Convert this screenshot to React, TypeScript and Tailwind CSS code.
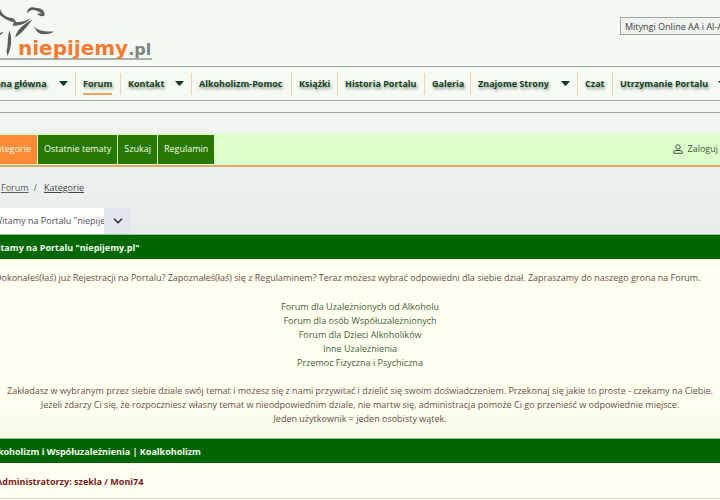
import { ReactElement } from 'react';
import clsx from 'clsx';

type MenuItem = {
  label: string;
  width: string;
  hasChildren?: boolean;
  isActive?: boolean;
};

const menuItems: MenuItem[] = [
  { label: 'Strona główna', width: 'w-[101px]', hasChildren: true },
  { label: 'Forum', width: 'w-[45px]', isActive: true },
  { label: 'Kontakt', width: 'w-[71px]', hasChildren: true },
  { label: 'Alkoholizm-Pomoc', width: 'w-[100px]' },
  { label: 'Książki', width: 'w-[46px]' },
  { label: 'Historia Portalu', width: 'w-[87px]' },
  { label: 'Galeria', width: 'w-[46px]' },
  { label: 'Znajome Strony', width: 'w-[107px]', hasChildren: true },
  { label: 'Czat', width: 'w-[35px]' },
  { label: 'Utrzymanie Portalu', width: 'w-[122px]', hasChildren: true },
];

const forumTabs = [
  { label: 'Kategorie', isActive: true },
  { label: 'Ostatnie tematy' },
  { label: 'Szukaj' },
  { label: 'Regulamin' },
];

const forumLinks = [
  'Forum dla Uzależnionych od Alkoholu',
  'Forum dla osób Współuzależnionych',
  'Forum dla Dzieci Alkoholików',
  'Inne Uzależnienia',
  'Przemoc Fizyczna i Psychiczna',
];

const Logo = (): ReactElement => (
  <a
    href="#home"
    className="relative block h-[60px] w-[152px] border-b-2 border-[#a9afa9]"
  >
    <svg
      className="absolute left-0 top-0"
      width="60"
      height="58"
      viewBox="0 0 60 58"
      fill="#5a5f5a"
      aria-hidden="true"
    >
      <path d="M0 9C2 14 5 16.500 9 17.500C13 18 15 19 16 22C21 22.500 26 21 31 18C27 23 20 26.500 12.500 25.500L14 22.500C8 21 3 18 0 15Z" />
      <path d="M32.500 19.500C24 24 17 29 15 37.500C21 34 27 27 32.500 19.500Z" />
      <path d="M27 13.500C27 8.500 31 6 36 8C41 7.500 45.500 11 44.500 15.500C42 17 39 16 37 13.500L41.500 13.500C39 11.500 37 10.500 34 10C31 9.500 29 11 27 13.500Z" />
      <path d="M33 25.500C37 30.500 44 32 54 31.500C49 35 41 35 37.500 32Z" />
      <path d="M9.500 30.500C12 37 12 47 7.500 56L6.500 51.500C8.500 44 7 37 9.500 30.500Z" />
      <path d="M0 33L4 31.500L1 34.500L0 35Z" />
    </svg>
    <span className="absolute bottom-0 left-[18px] whitespace-nowrap font-['DejaVu_Sans'] text-[20px] font-bold leading-[16px] text-[#f47a30]">
      niepijemy
      <span className="text-[16px] text-[#7b817d]">.pl</span>
    </span>
  </a>
);

const Caret = (): ReactElement => (
  <svg width="9" height="5" viewBox="0 0 9 5" fill="#123d20" aria-hidden="true">
    <path d="M0 0H9L5.2 4.4Q4.5 5 3.8 4.4Z" />
  </svg>
);

const MainMenu = (): ReactElement => (
  <nav className="flex h-[35px] items-center overflow-hidden border-y border-[#a0a8a0] bg-[#f5faf5]">
    <ul className="-ml-[25px] flex">
      {menuItems.map(({ label, width, hasChildren, isActive }) => (
        <li
          key={label}
          className={clsx(
            'flex h-[22px] shrink-0 items-center justify-between border-r border-[#f0d2b0] px-[7px]',
            width
          )}
        >
          <a
            href="#menu"
            className={clsx(
              'whitespace-nowrap border-b-2 pt-[2px] font-bold leading-[18px] text-[#183f22] [text-shadow:1px_2px_3px_#7d8f7d]',
              isActive ? 'border-[#f5a45c]' : 'border-transparent'
            )}
          >
            {label}
          </a>
          {hasChildren && <Caret />}
        </li>
      ))}
    </ul>
  </nav>
);

const ForumBar = (): ReactElement => (
  <div className="flex h-[34px] items-center justify-between overflow-hidden border-b-2 border-[#e2a868] bg-[#dcffcc]">
    <div className="-ml-[15px] flex gap-px">
      {forumTabs.map(({ label, isActive }) => (
        <a
          key={label}
          href="#tab"
          className={clsx(
            'flex h-[29px] items-center whitespace-nowrap px-[6px] text-[#f4ffe9]',
            isActive ? 'bg-[#ff8a35]' : 'bg-[#267800]'
          )}
        >
          {label}
        </a>
      ))}
    </div>
    <a
      href="#login"
      className="-mr-[12px] flex items-center gap-[5px] whitespace-nowrap text-[#3d5a38]"
    >
      <svg
        width="10"
        height="10"
        viewBox="0 0 10 10"
        fill="none"
        stroke="currentColor"
        aria-hidden="true"
      >
        <circle cx="5" cy="3" r="2.2" />
        <path d="M.8 9.3V8.2Q1 6.5 3 6.5H7Q9 6.5 9.2 8.2V9.3Z" />
      </svg>
      Zaloguj się
    </a>
  </div>
);

const SectionHeading = ({ title }: { title: string }): ReactElement => (
  <h2 className="h-[25px] overflow-hidden border-t border-[#8fc88f] bg-[#006600] font-bold leading-[26px] text-[#f4fff0]">
    <span className="-ml-[11px] whitespace-nowrap">{title}</span>
  </h2>
);

const App = (): ReactElement => {
  return (
    <div className="min-h-screen overflow-hidden bg-[#fffff0] font-['Open_Sans','Noto_Sans',sans-serif] text-[9px] leading-[14px]">
      <header className="bg-[#f4f9f4]">
        <div className="flex h-[66px] items-start justify-between overflow-hidden">
          <Logo />
          <button
            type="button"
            className="-mr-[40px] mt-[17px] h-[18px] w-[140px] overflow-hidden whitespace-nowrap border border-[#a0a5a0] bg-[#f0f3f0] px-[4px] pt-px text-left text-[#3c403c]"
          >
            Mityngi Online AA i Al-Anon
          </button>
        </div>
        <MainMenu />
        <div className="h-[12px] border-b border-[#a0a8a0]" />
      </header>

      <div className="bg-linear-to-b from-[#f2f6f2] via-[#edf1ef] to-[#e8ecec] pt-[20px]">
        <ForumBar />
        <nav
          aria-label="Breadcrumb"
          className="flex items-center gap-[5px] px-px pb-[13px] pt-[14px] text-[#5c605c]"
        >
          <a href="#forum" className="underline">
            Forum
          </a>
          <span>/</span>
          <a href="#kategorie" className="ml-[2px] text-[#454945] underline">
            Kategorie
          </a>
        </nav>
        <div className="relative h-[26px] w-[131px] overflow-hidden">
          <select
            aria-label="Kategoria"
            className="-ml-[6px] h-[26px] w-[110px] appearance-none overflow-hidden bg-white text-[#4c4e50]"
          >
            <option>Witamy na Portalu "niepijemy.pl"</option>
          </select>
          <span className="pointer-events-none absolute inset-y-0 right-0 flex w-[27px] items-center justify-center bg-[#e3e7ed]">
            <svg
              width="10"
              height="6"
              viewBox="0 0 10 6"
              fill="none"
              stroke="#22272b"
              strokeWidth="1.5"
              aria-hidden="true"
            >
              <path d="M1 .8L5 4.8L9 .8" />
            </svg>
          </span>
        </div>
      </div>

      <main>
        <SectionHeading title={'Witamy na Portalu "niepijemy.pl"'} />
        <div className="bg-linear-to-b from-[#fffff0] from-80% to-[#f8f8e8] py-[12px] text-center text-[#67504a]">
          <p className="-ml-[5px] whitespace-nowrap text-left">
            Dokonałeś(łaś) już Rejestracji na Portalu? Zapoznałeś(łaś) się z
            Regulaminem? Teraz możesz wybrać odpowiedni dla siebie dział.
            Zapraszamy do naszego grona na Forum.
          </p>
          <ul className="mb-[14px] mt-[15px]">
            {forumLinks.map((label) => (
              <li key={label}>
                <a href="#dzial" className="text-[#3f6340]">
                  {label}
                </a>
              </li>
            ))}
          </ul>
          <p className="whitespace-nowrap">
            Zakładasz w wybranym przez siebie dziale swój temat i możesz się z
            nami przywitać i dzielić się swoim doświadczeniem. Przekonaj się
            jakie to proste - czekamy na Ciebie.
            <br />
            Jeżeli zdarzy Ci się, że rozpoczniesz własny temat w nieodpowiednim
            dziale, nie martw się, administracja pomoże Ci go przenieść w
            odpowiednie miejsce.
            <br />
            Jeden użytkownik = jeden osobisty wątek.
          </p>
        </div>

        <SectionHeading title="Alkoholizm i Współuzależnienia | Koalkoholizm" />
        <div className="h-[36px] border-b border-[#dedfd4] font-bold leading-[37px] text-[#7d2025]">
          <span className="-ml-[4px]">Administratorzy: szekla / Moni74</span>
        </div>
      </main>
    </div>
  );
};

export default App;
